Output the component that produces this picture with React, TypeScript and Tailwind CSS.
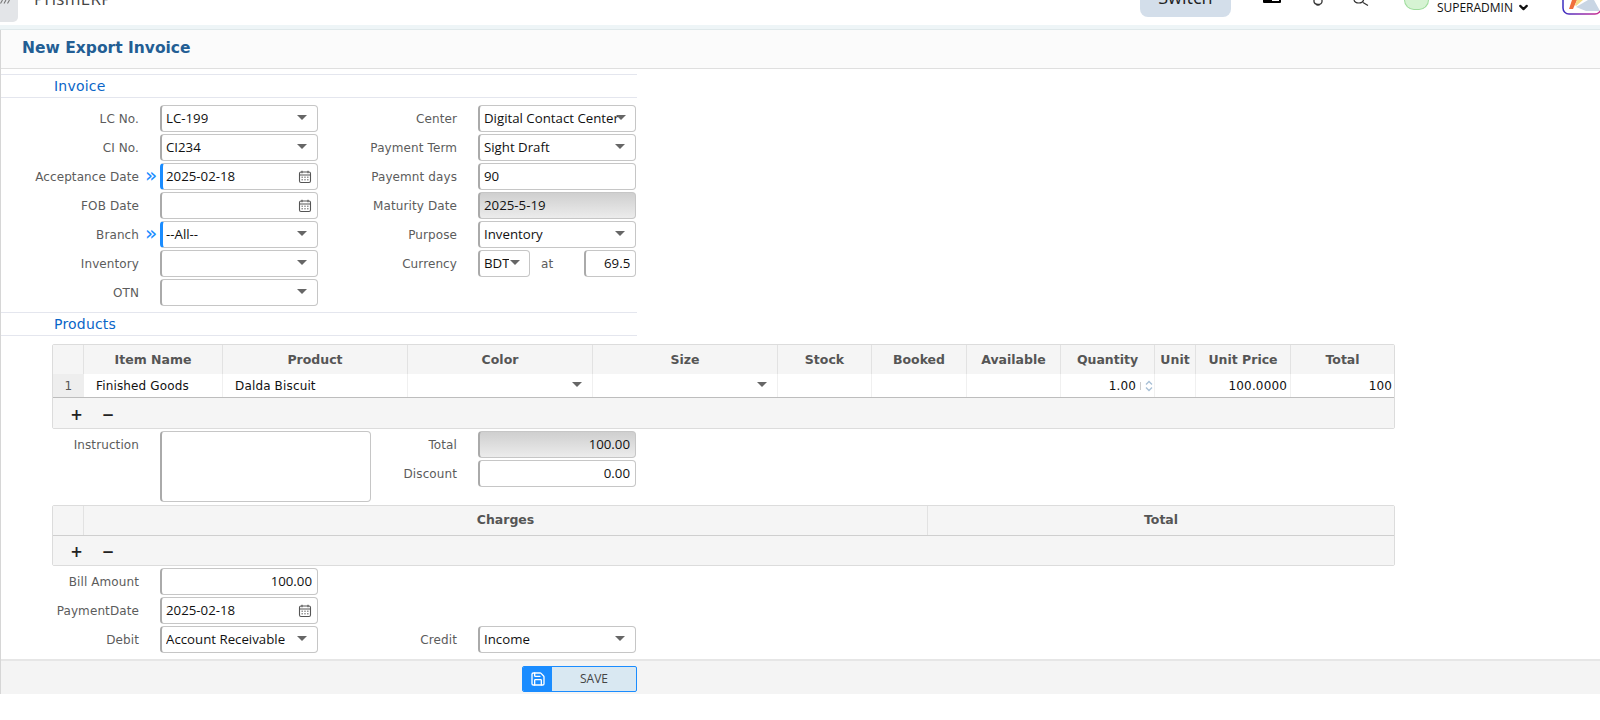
import React from "react";
import { Save, ChevronDown } from "lucide-react";

const labelCls = "text-[12px] text-[#5c5c5c] text-right tracking-[0.1px]";

function Caret() {
  return <span className="w-0 h-0 border-l-[5px] border-r-[5px] border-t-[5px] border-l-transparent border-r-transparent border-t-[#666] mb-[2px]" />;
}

function Cal() {
  return (
    <svg width="14" height="14" viewBox="0 0 14 14" fill="none" stroke="#555" strokeWidth="1.1">
      <rect x="1.5" y="2" width="11" height="10.5" rx="1.5" />
      <path d="M1.5 5h11M4 .8v2.4M10 .8v2.4" />
      <path d="M3.5 7.2h1.400M6.300 7.200h1.400M9.100 7.200h1.400M3.500 9.800h1.400M6.300 9.800h1.400M9.100 9.800h1.400" strokeWidth="1" />
    </svg>
  );
}

type FP = { value?: string; kind?: "select" | "date" | "text"; right?: boolean; required?: boolean; disabled?: boolean; width?: string };

function Field({ value = "", kind = "text", right, required, disabled, width = "w-[158px]" }: FP) {
  return (
    <div
      className={`${width} h-[27px] rounded-[4px] border border-[#c6c6c6] flex items-center justify-between pr-[5px] text-[13.25px] text-[#111] font-['Open_Sans',sans-serif] ${required ? "border-l-[3px] border-l-[#1a8cff] pl-[3px]" : "border-l-[2px] border-l-[#aaa] pl-[4px]"} ${disabled ? "bg-gradient-to-b from-[#cfcfcf] to-[#ececec]" : "bg-white"}`}
    >
      <span className={`whitespace-nowrap overflow-hidden pt-[1px] ${right ? "flex-1 text-right" : ""}`}>{value}</span>
      {kind === "select" && <span className="flex items-center pr-[5px] shrink-0"><Caret /></span>}
      {kind === "date" && <span className="flex items-center shrink-0"><Cal /></span>}
    </div>
  );
}

function Row({ label, marker, children }: { label: string; marker?: boolean; children: React.ReactNode }) {
  return (
    <div className="flex items-center h-[27px]">
      <div className={`${labelCls} w-[138px] shrink-0`}>{label}</div>
      <div className="w-[21px] shrink-0 flex items-center justify-center pl-[3px] pb-[3px] text-[#1a8cff] text-[20px] leading-none">{marker ? "»" : ""}</div>
      {children}
    </div>
  );
}

function RowR({ label, children }: { label: string; children: React.ReactNode }) {
  return (
    <div className="flex items-center h-[27px]">
      <div className={`${labelCls} w-[117px] shrink-0`}>{label}</div>
      <div className="w-[21px] shrink-0" />
      {children}
    </div>
  );
}

function Section({ title }: { title: string }) {
  return (
    <div className="w-[636px] h-[24px] border-t border-b border-[#e4e6ee] pl-[53px] pt-[1px] flex items-center text-[14px] text-[#0a66c8] tracking-[0.2px]">
      {title}
    </div>
  );
}

const cols: [string, string][] = [
  ["Item Name", "w-[139px]"],
  ["Product", "w-[185px]"],
  ["Color", "w-[185px]"],
  ["Size", "w-[185px]"],
  ["Stock", "w-[94px]"],
  ["Booked", "w-[95px]"],
  ["Available", "w-[94px]"],
  ["Quantity", "w-[94px]"],
  ["Unit", "w-[41px]"],
  ["Unit Price", "w-[95px]"],
  ["Total", "flex-1"],
];

function GridFooter({ h }: { h: string }) {
  return (
    <div className={`${h} bg-[#f5f5f5] flex items-end pb-[3px] rounded-b-[2px] text-[#222]`}>
      <span className="w-[47px] text-center text-[15px] font-bold leading-[20px]">+</span>
      <span className="w-[16px] text-center text-[15px] font-bold leading-[20px]">−</span>
    </div>
  );
}

function ProductsGrid() {
  return (
    <div className="ml-[51px] w-[1343px] border border-[#dcdcdc] rounded-[2px] text-[12px]">
      <div className="flex h-[29px] bg-[#f5f5f5] font-bold text-[#555] text-[12.5px]">
        <div className="w-[31px] border-r border-[#e2e2e2]" />
        {cols.map(([t, w]) => (
          <div key={t} className={`${w} border-r last:border-r-0 border-[#e2e2e2] pt-[1px] flex items-center justify-center`}>{t}</div>
        ))}
      </div>
      <div className="flex h-[24px] bg-white border-b border-[#bdbdbd] text-[#111] items-stretch tracking-[0.15px]">
        <div className="w-[31px] bg-[#eeeeee] text-[#555] flex items-center justify-center">1</div>
        <div className="w-[139px] border-r border-[#f0f0f0] pl-[12px] flex items-center">Finished Goods</div>
        <div className="w-[185px] border-r border-[#f0f0f0] pl-[12px] flex items-center">Dalda Biscuit</div>
        <div className="w-[185px] border-r border-[#f0f0f0] flex items-center justify-end pr-[10px]"><Caret /></div>
        <div className="w-[185px] border-r border-[#f0f0f0] flex items-center justify-end pr-[10px]"><Caret /></div>
        <div className="w-[94px] border-r border-[#f0f0f0]" />
        <div className="w-[95px] border-r border-[#f0f0f0]" />
        <div className="w-[94px] border-r border-[#f0f0f0]" />
        <div className="w-[94px] border-r border-[#f0f0f0] flex items-center justify-end pr-[1px] gap-[4px]">
          <span>1.00</span>
          <span className="w-px h-[8px] bg-[#ccc]" />
          <svg width="8" height="12" viewBox="0 0 8 12" fill="none" stroke="#a9c0d6" strokeWidth="1.4"><path d="M1 4.500 4 1.500 7 4.500M1 7.500 4 10.500 7 7.500" /></svg>
        </div>
        <div className="w-[41px] border-r border-[#f0f0f0]" />
        <div className="w-[95px] border-r border-[#f0f0f0] flex items-center justify-end pr-[3px]">100.0000</div>
        <div className="flex-1 flex items-center justify-end pr-[2px]">100</div>
      </div>
      <GridFooter h="h-[30px]" />
    </div>
  );
}

function ChargesGrid() {
  return (
    <div className="ml-[51px] w-[1343px] border border-[#dcdcdc] rounded-[2px]">
      <div className="flex h-[30px] bg-[#f5f5f5] font-bold text-[#555] text-[12.5px] border-b border-[#cfcfcf]">
        <div className="w-[31px] border-r border-[#e2e2e2]" />
        <div className="w-[844px] border-r border-[#e2e2e2] flex items-center justify-center">Charges</div>
        <div className="flex-1 flex items-center justify-center">Total</div>
      </div>
      <GridFooter h="h-[29px]" />
    </div>
  );
}

export default function App() {
  return (
    <div className="w-[1600px] h-[720px] overflow-hidden bg-white font-['DejaVu_Sans',sans-serif]">
      {/* top bar, cropped at the window's top edge */}
      <header className="h-[25px] overflow-hidden flex items-end bg-white relative">
        <div className="w-[18px] h-[22px] bg-[#e3e5e8] rounded-br-[5px] self-start">
          <svg width="12" height="4" viewBox="0 0 12 4" fill="none" stroke="#777" strokeWidth="1.1"><path d="M2.500 0 0.500 3.500M6 0 4 3.500M9.500 0 7.500 3.500" /></svg>
        </div>
        <div className="ml-[16px] mb-[15px] text-[17px] leading-[22px] text-[#444] font-['Open_Sans',sans-serif] tracking-[0.3px]">PrismERP</div>
        <div className="flex-1" />
        <div className="w-[91px] h-[42px] mb-[8px] mr-[32px] rounded-[8px] bg-[#d3deea] flex items-end justify-center pb-[6px] text-[18px] text-[#222] font-['Open_Sans',sans-serif]">Switch</div>
        <div className="mb-[22px] mr-[30px] w-[18px] h-[10px] border-2 border-black bg-[linear-gradient(90deg,#000_50%,#fff_50%)] rounded-[1px]" />
        <svg className="self-start mr-[27px]" width="14" height="6" viewBox="0 0 14 6" fill="none" stroke="#333" strokeWidth="1.3"><path d="M3 0v1.500a4 3 0 0 0 8 0V0M5.500 4.400c0 1 3 1 3 0" /></svg>
        <svg className="self-start mr-[34px]" width="18" height="6" viewBox="0 0 18 6" fill="none" stroke="#333" strokeWidth="1.2"><path d="M2 0c.5 2 2.500 3 5 3s4-1 4.600-3M11 2.500 16 5.500" /></svg>
        <div className="self-start w-[25px] h-[10px] rounded-b-full border border-[#9edc9c] border-t-0 bg-[#d6f3d3]" />
        <div className="self-start ml-[8px] mt-[1px] flex items-center gap-[4px] text-[12px] leading-[11px] text-[#111] font-['Open_Sans',sans-serif]">
          SUPERADMIN <ChevronDown size={13} strokeWidth={4} />
        </div>
        <svg className="self-start ml-[32px]" width="38" height="15" viewBox="0 0 38 15">
          <defs>
            <linearGradient id="logoEdge" x1="0" x2="1" y1="0" y2="0">
              <stop offset="0" stopColor="#3b2fc0" />
              <stop offset="0.5" stopColor="#8a2db0" />
              <stop offset="1" stopColor="#d0308f" />
            </linearGradient>
          </defs>
          <rect x="1" y="-12" width="38" height="26" rx="6" fill="#fff" stroke="url(#logoEdge)" strokeWidth="1.500" />
          <path d="M7 9 10 0h5l-4 9z" fill="#f0703c" />
          <path d="M13 5 15 0h6l-7 6z" fill="#f6dc86" />
          <path d="M14 7 26 0h6l6 11H24z" fill="#c9d6e4" />
        </svg>
      </header>
      <div className="h-[5px] bg-[#eef5f7] border-b border-[#dfe8ea]" />

      <main className="border-l border-[#d6d6d6]">
        <div className="h-[39px] bg-[#fbfbfb] border-b border-[#dfdfdf] pl-[21px] pb-[1px] flex items-center text-[#235e94] text-[15.5px] font-bold">
          New Export Invoice
        </div>
        <div className="h-[5px]" />
        <Section title="Invoice" />

        <div className="flex mt-[7px] h-[207px]">
          <div className="w-[339px] flex flex-col gap-[2px] shrink-0">
            <Row label="LC No."><Field value="LC-199" kind="select" /></Row>
            <Row label="CI No."><Field value="CI234" kind="select" /></Row>
            <Row label="Acceptance Date" marker><Field value="2025-02-18" kind="date" required /></Row>
            <Row label="FOB Date"><Field kind="date" /></Row>
            <Row label="Branch" marker><Field value="--All--" kind="select" required /></Row>
            <Row label="Inventory"><Field kind="select" /></Row>
            <Row label="OTN"><Field kind="select" /></Row>
          </div>
          <div className="flex flex-col gap-[2px]">
            <RowR label="Center">
              <div className="relative">
                <Field value="Digital Contact Center" />
                <span className="absolute right-[10px] top-[10px] flex"><Caret /></span>
              </div>
            </RowR>
            <RowR label="Payment Term"><Field value="Sight Draft" kind="select" /></RowR>
            <RowR label="Payemnt days"><Field value="90" /></RowR>
            <RowR label="Maturity Date"><Field value="2025-5-19" disabled /></RowR>
            <RowR label="Purpose"><Field value="Inventory" kind="select" /></RowR>
            <RowR label="Currency">
              <div className="relative">
                <Field value="BDT" width="w-[52px]" />
                <span className="absolute left-[32px] top-[10px] flex"><Caret /></span>
              </div>
              <span className={`${labelCls} ml-[11px] mr-[31px]`}>at</span>
              <Field value="69.5" right width="w-[52px]" />
            </RowR>
          </div>
        </div>

        <Section title="Products" />
        <div className="h-[8px]" />
        <ProductsGrid />

        <div className="flex mt-[2px] h-[74px]">
          <div className="w-[339px] flex shrink-0">
            <div className={`${labelCls} w-[138px] pt-[5px] shrink-0`}>Instruction</div>
            <div className="w-[21px] shrink-0" />
            <div className="w-[211px] h-[71px] rounded-[4px] border border-[#c6c6c6] border-l-2 border-l-[#aaa] bg-white shrink-0" />
          </div>
          <div className="flex flex-col gap-[2px]">
            <RowR label="Total"><Field value="100.00" right disabled /></RowR>
            <RowR label="Discount"><Field value="0.00" right /></RowR>
          </div>
        </div>

        <ChargesGrid />

        <div className="mt-[2px] flex flex-col gap-[2px]">
          <Row label="Bill Amount"><Field value="100.00" right /></Row>
          <Row label="PaymentDate"><Field value="2025-02-18" kind="date" /></Row>
          <div className="flex">
            <div className="w-[339px] shrink-0">
              <Row label="Debit"><Field value="Account Receivable" kind="select" /></Row>
            </div>
            <RowR label="Credit"><Field value="Income" kind="select" /></RowR>
          </div>
        </div>

        <div className="mt-[6px] h-[35px] bg-[#f4f4f4] border-t-2 border-[#e6e6e6] pl-[521px] pt-[2px] flex items-center">
          <button className="w-[115px] h-[26px] flex rounded-[2px] border border-[#1a8cff] overflow-hidden bg-[#d9e8f2] text-[12px] text-[#444]">
            <span className="w-[29px] h-full bg-[#1a8cff] flex items-center justify-center text-white"><Save size={16} /></span>
            <span className="flex-1 h-full flex items-center justify-center font-['Open_Sans',sans-serif]">SAVE</span>
          </button>
        </div>
      </main>
    </div>
  );
}
